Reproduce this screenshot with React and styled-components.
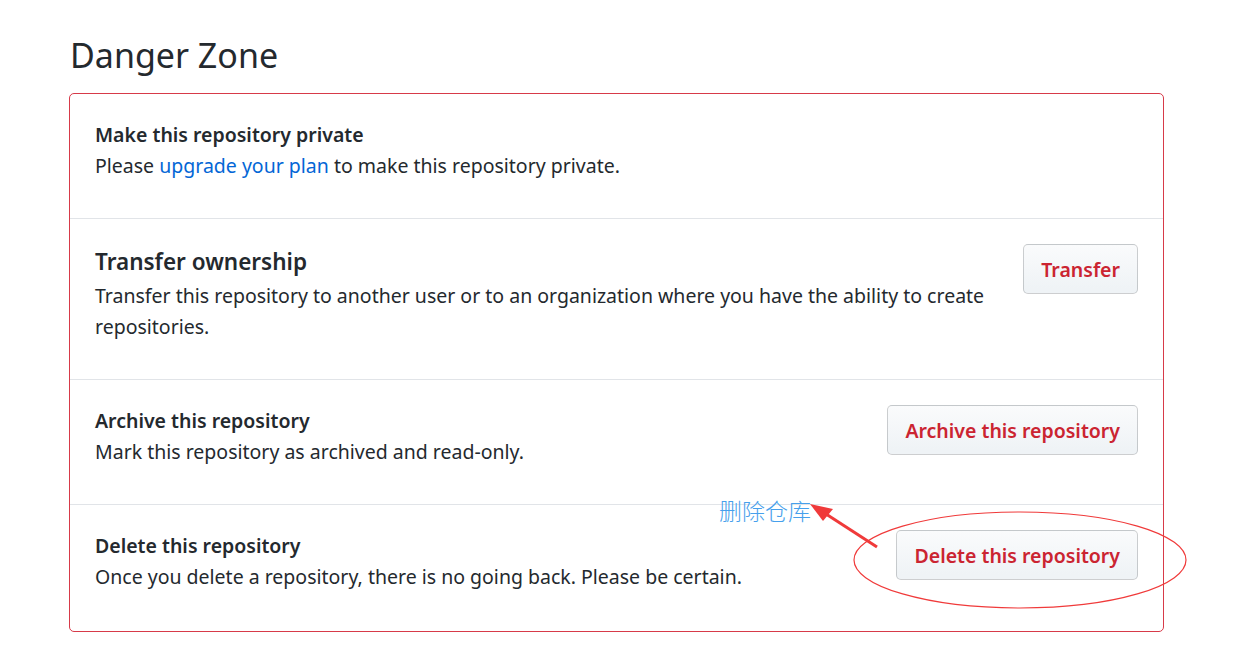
import styled, { createGlobalStyle } from "styled-components";

const GlobalStyle = createGlobalStyle`
  html, body {
    margin: 0;
    padding: 0;
    background: #fff;
  }
  body {
    font-family: "Noto Sans", "Open Sans", "Noto Sans CJK SC", sans-serif;
    color: #24292e;
  }
`;

const rows = [
  {
    id: "private",
    title: "Make this repository private",
    desc: (
      <>
        Please <a href="#upgrade">upgrade your plan</a> to make this repository private.
      </>
    ),
  },
  {
    id: "transfer",
    title: "Transfer ownership",
    big: true,
    desc: "Transfer this repository to another user or to an organization where you have the ability to create repositories.",
    button: "Transfer",
  },
  {
    id: "archive",
    title: "Archive this repository",
    desc: "Mark this repository as archived and read-only.",
    button: "Archive this repository",
  },
  {
    id: "delete",
    title: "Delete this repository",
    desc: "Once you delete a repository, there is no going back. Please be certain.",
    button: "Delete this repository",
  },
];

export default function App() {
  return (
    <>
      <GlobalStyle />
      <Page>
        <Heading>Danger Zone</Heading>
        <DangerBox>
          {rows.map((row) => (
            <Row key={row.id}>
              <Info>
                <Title $big={row.big}>{row.title}</Title>
                <Desc>{row.desc}</Desc>
              </Info>
              {row.button && <DangerButton>{row.button}</DangerButton>}
            </Row>
          ))}
        </DangerBox>

        <Note>删除仓库</Note>
        <Markup width="1240" height="668" viewBox="0 0 1240 668">
          <ellipse cx="1020" cy="560" rx="166" ry="48" fill="none" stroke="#f03a3a" strokeWidth="1.2" />
          <line x1="877" y1="547" x2="826" y2="514" stroke="#f03a3a" strokeWidth="3" />
          <polygon points="810,504 833,509 823,521" fill="#f03a3a" />
        </Markup>
      </Page>
    </>
  );
}

const Page = styled.div`
  position: relative;
  width: 1240px;
  height: 668px;
  padding: 32px 76px 0 69px;
  box-sizing: border-box;
`;

const Heading = styled.h2`
  margin: 0 0 14px 1px;
  font-size: 34px;
  font-weight: 400;
  line-height: 47px;
  color: #24292e;
`;

const DangerBox = styled.div`
  border: 1px solid #d73a49;
  border-radius: 5px;
  background: #fff;
`;

const Row = styled.div`
  display: flex;
  align-items: flex-start;
  justify-content: space-between;
  gap: 30px;
  padding: 25px 25px;
  border-top: 1px solid #e1e4e8;

  &:first-child {
    border-top: none;
  }

  &:last-child {
    padding-bottom: 27px;
  }
`;

const Info = styled.div`
  flex: 1;
  min-width: 0;
`;

const Title = styled.div`
  font-size: ${(p) => (p.$big ? "22.5px" : "19.5px")};
  line-height: ${(p) => (p.$big ? "36px" : "31px")};
  font-weight: 600;
  color: #24292e;
`;

const Desc = styled.p`
  margin: 0 0 12px;
  font-size: 19.5px;
  line-height: 31px;
  color: #24292e;

  a {
    color: #0366d6;
    text-decoration: none;
  }
`;

const DangerButton = styled.button`
  flex: none;
  height: 50px;
  padding: 0 17px;
  font-family: inherit;
  font-size: 19.5px;
  font-weight: 600;
  color: #cb2431;
  background: linear-gradient(180deg, #fafbfc 0%, #eff3f6 90%);
  border: 1px solid rgba(27, 31, 35, 0.2);
  border-radius: 5px;
  cursor: pointer;
`;

const Note = styled.div`
  position: absolute;
  left: 719px;
  top: 494px;
  font-size: 23px;
  line-height: 32px;
  color: #46a0ec;
  font-family: "Noto Sans CJK SC", sans-serif;
  font-weight: 300;
`;

const Markup = styled.svg`
  position: absolute;
  left: 0;
  top: 0;
  pointer-events: none;
`;
